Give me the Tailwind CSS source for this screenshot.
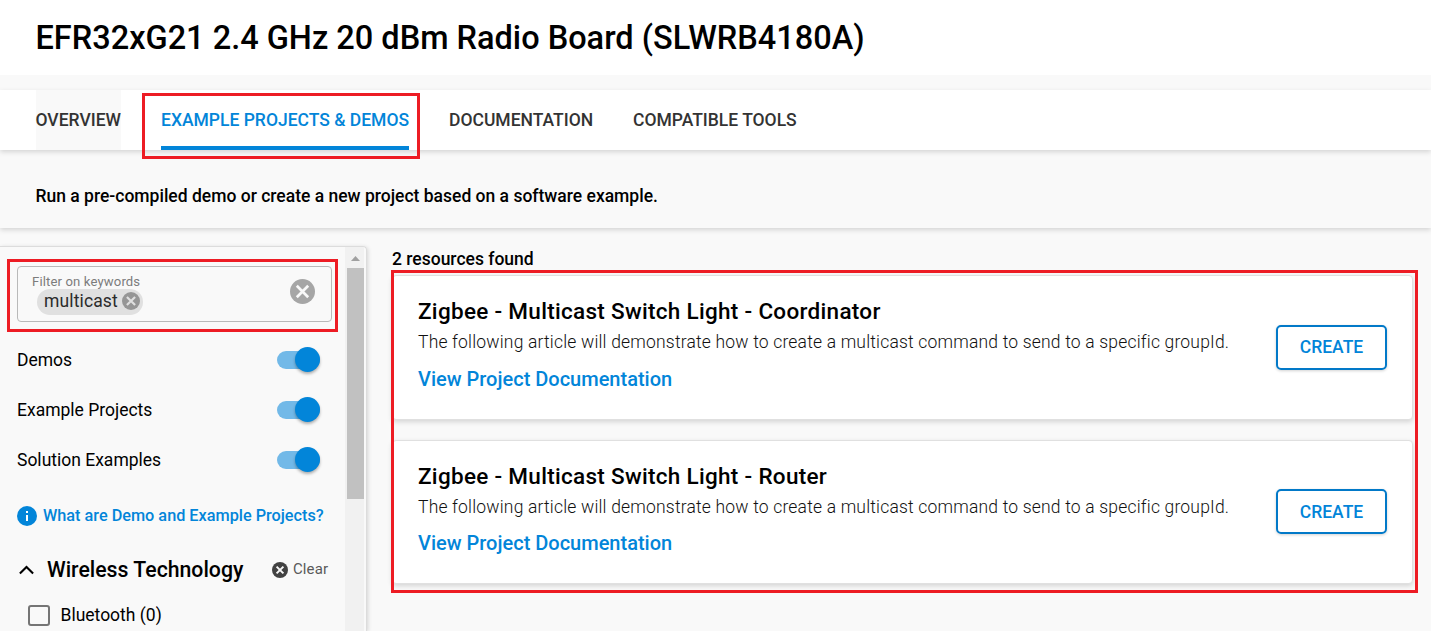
<!DOCTYPE html>
<html lang="en">
<head>
<meta charset="utf-8">
<title>EFR32xG21 Radio Board</title>
<script src="https://cdn.jsdelivr.net/npm/@tailwindcss/browser@4"></script>
</head>
<body class="relative flex h-[631px] w-[1431px] flex-col overflow-hidden bg-[#f9f9f9] font-['Roboto',sans-serif] text-[17.5px] leading-6 text-black">
  <header class="flex h-[75px] shrink-0 items-center bg-white pl-[35.5px]">
    <h1 class="text-[32.5px] leading-10 font-medium">EFR32xG21 2.4 GHz 20 dBm Radio Board (SLWRB4180A)</h1>
  </header>

  <nav class="relative z-10 mt-[15px] flex h-[60px] shrink-0 gap-10 bg-white px-9 font-medium text-[#333] shadow-[0_2px_5px_rgba(0,0,0,0.15)]">
    <a class="flex w-[85px] items-center bg-[#f9f9f9] whitespace-nowrap"><span class="-ml-[0.5px]">OVERVIEW</span></a>
    <a class="flex w-[248px] items-center border-b-4 border-[#0285d9] pt-1 whitespace-nowrap text-[#0285d9]">EXAMPLE PROJECTS &amp; DEMOS</a>
    <a class="flex w-[144px] items-center whitespace-nowrap">DOCUMENTATION</a>
    <a class="flex items-center whitespace-nowrap">COMPATIBLE TOOLS</a>
  </nav>

  <section class="h-[78px] shrink-0 pt-[34px] pl-[35.5px] font-medium shadow-[0_2px_5px_rgba(0,0,0,0.15)]">Run a pre-compiled demo or create a new project based on a software example.</section>

  <main class="flex min-h-0 flex-1">
    <aside class="mt-[18px] flex w-[367px] rounded-tr-[4px] border-t border-r border-[#dcdcdc] shadow-[1px_1px_4px_rgba(0,0,0,0.15)]">
      <div class="w-[345px] pl-[17px]">
        <div class="mt-[19px] flex h-[56px] w-[315px] items-start justify-between rounded border border-[#b9b9b9] pl-[14px] pr-4">
          <div class="pt-[7px]">
            <div class="h-[15px] text-[13.125px] leading-4 tracking-[0.13px] text-[#7c7c7c]">Filter on keywords</div>
            <div class="ml-[5px] flex h-[26px] w-[106px] items-center rounded-full bg-[#e0e0e0] pl-[7px] text-[#2b2b2b]">
              <span class="w-[78px] pb-[3px] tracking-[0.13px]">multicast</span>
              <svg class="-mt-[2px] size-[18px]" viewBox="0 0 18 18"><circle cx="9" cy="9" r="9" fill="#969696"/><path d="M4.9 4.9l8.2 8.2M13.1 4.9l-8.2 8.2" stroke="#e0e0e0" stroke-width="2.1"/></svg>
            </div>
          </div>
          <svg class="mt-[11.5px] size-[25px]" viewBox="0 0 25 25"><circle cx="12.5" cy="12.5" r="12.5" fill="#a6a6a6"/><path d="M6.8 6.8l11.4 11.4M18.2 6.8L6.8 18.2" stroke="#f9f9f9" stroke-width="2.7"/></svg>
        </div>

        <div class="mt-[13px] flex h-[50px] items-center justify-between pr-[25px]">
          <span>Demos</span>
          <span class="flex h-[18px] w-[43px] items-start justify-end rounded-full bg-[#72b9e8]"><i class="-mt-1 size-[25px] rounded-full bg-[#0285d9] shadow-[0_2px_3px_rgba(0,0,0,0.3)]"></i></span>
        </div>
        <div class="flex h-[50px] items-center justify-between pr-[25px]">
          <span>Example Projects</span>
          <span class="flex h-[18px] w-[43px] items-start justify-end rounded-full bg-[#72b9e8]"><i class="-mt-1 size-[25px] rounded-full bg-[#0285d9] shadow-[0_2px_3px_rgba(0,0,0,0.3)]"></i></span>
        </div>
        <div class="flex h-[50px] items-center justify-between pr-[25px]">
          <span>Solution Examples</span>
          <span class="flex h-[18px] w-[43px] items-start justify-end rounded-full bg-[#72b9e8]"><i class="-mt-1 size-[25px] rounded-full bg-[#0285d9] shadow-[0_2px_3px_rgba(0,0,0,0.3)]"></i></span>
        </div>

        <a class="mt-[19px] flex h-6 items-center gap-[6px] text-[16.25px] font-medium whitespace-nowrap text-[#0285d9]">
          <svg class="-mt-px size-5 shrink-0" viewBox="0 0 20 20"><circle cx="10" cy="10" r="10" fill="#0285d9"/><path d="M9 5h2v2H9zM9 9h2v6H9z" fill="#fff"/></svg>
          What are Demo and Example Projects?
        </a>

        <div class="mt-[30px] flex h-6 items-center">
          <svg class="-mt-[2px] ml-[1.5px] size-[15px]" viewBox="0 0 15 15"><path d="M0.9 11.6L7.5 5l6.6 6.6" fill="none" stroke="#000" stroke-width="2.1"/></svg>
          <h2 class="ml-[13.5px] w-[224.5px] text-[21.25px] font-medium">Wireless Technology</h2>
          <svg class="size-4 shrink-0" viewBox="0 0 16 16"><circle cx="8" cy="8" r="8" fill="#424242"/><path d="M4.6 4.6l6.8 6.8M11.4 4.6l-6.8 6.8" stroke="#f9f9f9" stroke-width="2"/></svg>
          <span class="ml-[5.5px] pb-[2px] text-[15px] tracking-[0.1px] text-[#5a5a5a]">Clear</span>
        </div>
        <div class="mt-[21px] ml-[11px] flex h-6 items-center">
          <span class="h-[21px] w-[22px] rounded-[3px] border-2 border-[#757575]"></span>
          <span class="ml-[10.5px]">Bluetooth (0)</span>
        </div>
      </div>
      <div class="flex w-[19px] flex-col bg-[#f1f1f1] pl-[2px]">
        <svg class="h-[21px] w-[17px] shrink-0" viewBox="0 0 17 21"><path d="M4 14h9L8.5 9z" fill="#a0a0a0"/></svg>
        <div class="h-[231px] w-[17px] shrink-0 bg-[#c1c1c1]"></div>
      </div>
    </aside>

    <section class="ml-[25px] w-[1021px] pt-[19px]">
      <h3 class="font-medium">2 resources found</h3>
      <article class="mt-1 flex h-[145px] justify-between rounded border border-[#e0e0e0] bg-white pl-[25px] pr-[25px] shadow-[0_2px_5px_rgba(0,0,0,0.15)]">
        <div>
          <h4 class="mt-[23px] text-[22.5px] font-medium tracking-[0.3px]">Zigbee - Multicast Switch Light - Coordinator</h4>
          <p class="mt-[7px] font-light tracking-[0.185px] text-[#111]">The following article will demonstrate how to create a multicast command to send to a specific groupId.</p>
          <a class="mt-[13px] block text-xl leading-6 font-medium text-[#0285d9]">View Project Documentation</a>
        </div>
        <button class="mt-[49px] h-[45px] w-[111px] rounded-[5px] border-2 border-[#0279c8] pb-[2px] font-medium text-[#0285d9] shadow-[0_1px_3px_rgba(0,0,0,0.18)]">CREATE</button>
      </article>
      <article class="mt-5 flex h-[144px] justify-between rounded border border-[#e0e0e0] bg-white pl-[25px] pr-[25px] shadow-[0_2px_5px_rgba(0,0,0,0.15)]">
        <div>
          <h4 class="mt-[23px] text-[22.5px] font-medium tracking-[0.3px]">Zigbee - Multicast Switch Light - Router</h4>
          <p class="mt-[7px] font-light tracking-[0.185px] text-[#111]">The following article will demonstrate how to create a multicast command to send to a specific groupId.</p>
          <a class="mt-3 block text-xl leading-6 font-medium text-[#0285d9]">View Project Documentation</a>
        </div>
        <button class="mt-12 h-[45px] w-[111px] rounded-[5px] border-2 border-[#0279c8] font-medium text-[#0285d9] shadow-[0_1px_3px_rgba(0,0,0,0.18)]">CREATE</button>
      </article>
    </section>
  </main>

  <!-- highlight frames -->
  <div class="absolute top-[93px] left-[142px] z-20 h-[66px] w-[278px] border-3 border-[#ed1c24]"></div>
  <div class="absolute top-[259px] left-[7px] z-20 h-[73px] w-[331px] border-3 border-[#ed1c24]"></div>
  <div class="absolute top-[270px] left-[391px] z-20 h-[323px] w-[1027px] border-3 border-[#ed1c24]"></div>
</body>
</html>
